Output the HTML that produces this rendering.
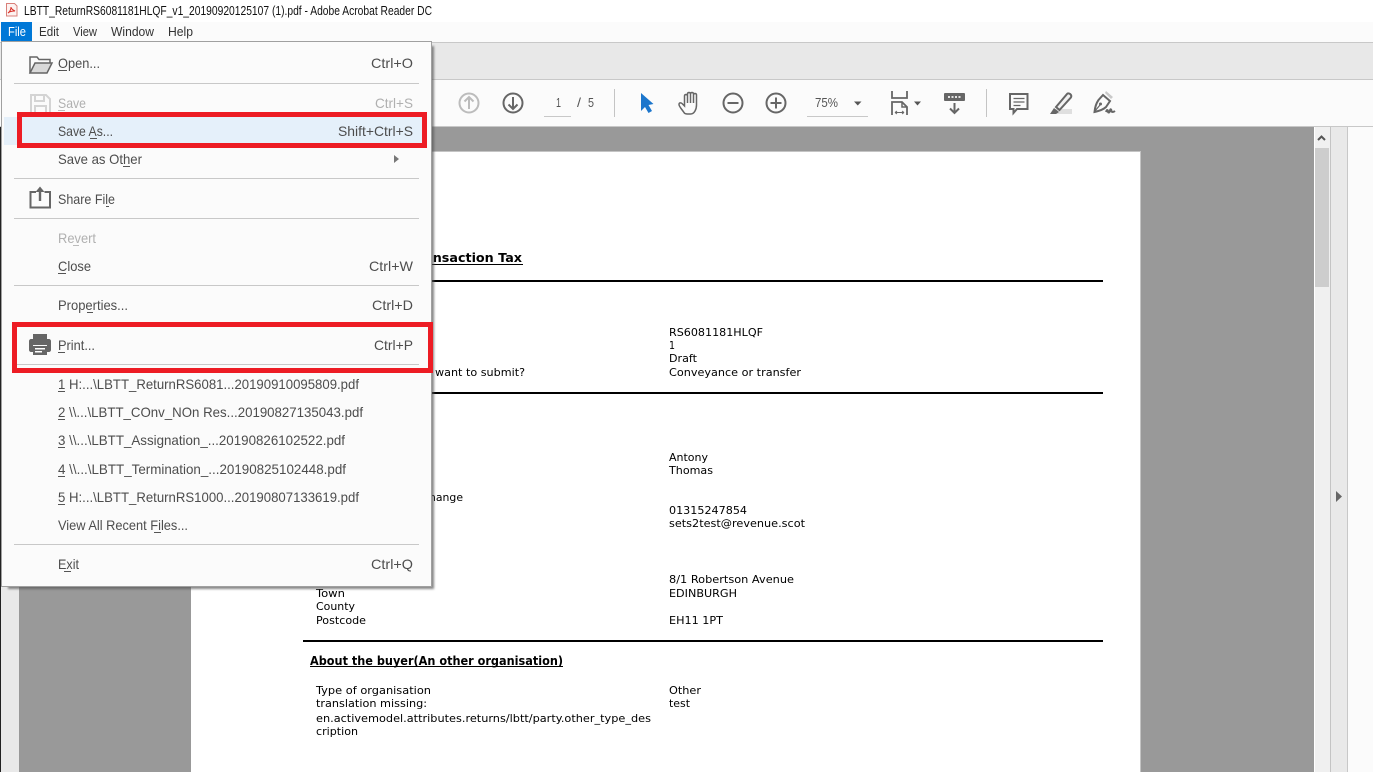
<!DOCTYPE html>
<html lang="en">
<head>
<meta charset="utf-8">
<title>Adobe Acrobat Reader DC</title>
<style>
html,body{margin:0;padding:0;background:#fff;width:1396px;height:772px;overflow:hidden}
svg{display:block}
.m{font-family:"Liberation Sans",sans-serif;font-size:14px;fill:#4d4d4d}
.d{fill:#b0b0b0}
.t{font-family:"Liberation Sans",sans-serif;font-size:13px;fill:#111}
.b{font-family:"Liberation Sans",sans-serif;font-size:13px;fill:#333}
.p{font-family:"DejaVu Sans",sans-serif;font-size:11px;fill:#000}
.h{font-family:"DejaVu Sans",sans-serif;font-size:12px;font-weight:bold;fill:#000}
.tb{font-family:"Liberation Sans",sans-serif;font-size:13px;fill:#555}
.i{fill:none;stroke:#666;stroke-width:2}
</style>
</head>
<body>
<svg width="1396" height="772" viewBox="0 0 1396 772" xmlns="http://www.w3.org/2000/svg">
<defs><filter id="s" x="-5%" y="-5%" width="110%" height="110%"><feGaussianBlur stdDeviation="1"/></filter></defs>
<rect width="1396" height="772" fill="#fff"/>

<!-- title bar -->
<path d="M6.500 3.500h8l2.500 2.500v10h-10.500z" fill="#fdf2f0" stroke="#d9807a"/>
<path d="M8 13c2-1 3-4 3-6 0 2 2 3 4 4-2 0-5 0-7 2z" fill="none" stroke="#d8322a"/>
<text class="t" x="24" y="15" textLength="408" lengthAdjust="spacingAndGlyphs">LBTT_ReturnRS6081181HLQF_v1_20190920125107 (1).pdf - Adobe Acrobat Reader DC</text>

<!-- menu bar -->
<rect x="0" y="22" width="1373" height="20" fill="#fbfbfb"/>
<rect x="1" y="22" width="31" height="19" fill="#0078d7"/>
<text class="b" x="8" y="36" textLength="18" lengthAdjust="spacingAndGlyphs" style="fill:#fff">File</text>
<text class="b" x="39" y="36" textLength="20" lengthAdjust="spacingAndGlyphs">Edit</text>
<text class="b" x="73" y="36" textLength="24" lengthAdjust="spacingAndGlyphs">View</text>
<text class="b" x="111" y="36" textLength="43" lengthAdjust="spacingAndGlyphs">Window</text>
<text class="b" x="168" y="36" textLength="25" lengthAdjust="spacingAndGlyphs">Help</text>

<!-- tab bar -->
<rect x="0" y="42" width="1373" height="38" fill="#e8e8e8"/>
<rect x="0" y="42" width="1373" height="1" fill="#c8c8c8"/>
<rect x="0" y="79" width="1373" height="1" fill="#c8c8c8"/>

<!-- toolbar -->
<rect x="0" y="80" width="1373" height="46" fill="#fbfbfb"/>
<rect x="0" y="126" width="1373" height="1" fill="#c8c8c8"/>

<circle cx="469" cy="103" r="9.500" fill="none" stroke="#bcbcbc" stroke-width="2"/>
<path d="M469 109V97M464.500 101.500l4.500-4.500 4.500 4.500" fill="none" stroke="#bcbcbc" stroke-width="2"/>
<circle cx="513" cy="103" r="9.500" class="i"/>
<path d="M513 97v12M508.500 104.500l4.500 4.500 4.500-4.500" class="i"/>

<text class="tb" x="556" y="107" textLength="5" lengthAdjust="spacingAndGlyphs">1</text>
<rect x="544" y="116" width="27" height="1" fill="#c8c8c8"/>
<text class="tb" x="577" y="107" textLength="4" lengthAdjust="spacingAndGlyphs">/</text>
<text class="tb" x="588" y="107" textLength="6" lengthAdjust="spacingAndGlyphs">5</text>
<rect x="614" y="89" width="1" height="28" fill="#c4c4c4"/>

<path d="M641 93L653.500 104 648.500 105 652 111 648.500 113 645 107 641 111z" fill="#1c76cc"/>

<path d="M684 112.500c-2-3-5-6-5-8 0-2 2-2 3-1l2.500 2.500V96c0-2 3-2 3 0v-2c0-2 3-2 3 0v0c0-2 3-2 3 0v1c0-2 3-2 3 0v10c0 4-2 9-6 9h-3c-2 0-3-.5-3.500-1.500zM687.500 96v7M690.500 94v9M693.500 94v9" fill="none" stroke="#666" stroke-width="1.500"/>

<circle cx="733" cy="103" r="9.500" class="i"/>
<path d="M727.500 103h11" class="i"/>
<circle cx="776" cy="103" r="9.500" class="i"/>
<path d="M770.500 103h11M776 97.500v11" class="i"/>

<text class="tb" x="815" y="107" textLength="23" lengthAdjust="spacingAndGlyphs">75%</text>
<rect x="807" y="116" width="61" height="1" fill="#c8c8c8"/>
<path d="M854 101.500h7.500l-3.750 4z" fill="#555"/>

<path d="M892 91v7h15v-7" class="i" style="stroke-width:1.800"/>
<path d="M892 115v-13h10l5 5v8" fill="none" stroke="#666" stroke-width="1.800"/>
<path d="M902 102v5h5" fill="none" stroke="#666" stroke-width="1.500"/>
<path d="M895 112.500h9M895 112.500l2-1.500M895 112.500l2 1.500M904 112.500l-2-1.500M904 112.500l-2 1.500" fill="none" stroke="#666"/>
<path d="M914 101.500h7l-3.500 4z" fill="#555"/>

<rect x="944" y="93" width="21" height="8" rx="1" fill="#666"/>
<path d="M948 97h2M951.500 97h2M955 97h2M958.500 97h2" stroke="#e4e4e4" stroke-width="2"/>
<path d="M954.500 103v10M950 108.500l4.500 4.500 4.500-4.500" class="i"/>
<rect x="986" y="89" width="1" height="28" fill="#c4c4c4"/>

<path d="M1010 94h17.500v15h-10.500l-3.500 4v-4h-3.500z" class="i"/>
<path d="M1013.500 98.500h11M1013.500 102h11M1013.500 105.500h7" stroke="#666" fill="none" stroke-width="1.200"/>

<rect x="1055" y="109" width="17" height="5" fill="#dfdfdf"/>
<path d="M1056 107l11-13c1-1.500 3.500 0 4 1 .5 1 .5 2-.5 3l-11 12z" fill="#f2f2f2" stroke="#666" stroke-width="2"/>
<path d="M1054 108l5 4-3 2h-6z" fill="#666"/>

<path d="M1106 91l7 6-2 2-6-6z" fill="#c9c9c9"/>
<path d="M1103 95l7 6-4 6c-3 3-7 4-11.500 5 .5-5 1.500-8.500 4-12z" fill="none" stroke="#666" stroke-width="2"/>
<path d="M1095 111l5-6" stroke="#666" stroke-width="1.200"/>
<circle cx="1100.500" cy="104" r="1.500" fill="#666"/>
<path d="M1106 112c1-3 2-2 2-.5s1.500 1.500 2-1 1.500-.5 1.500.5 1.500 1.500 3.500 0" fill="none" stroke="#666" stroke-width="2"/>

<!-- document area -->
<rect x="0" y="127" width="1373" height="645" fill="#999"/>
<rect x="0" y="127" width="1" height="645" fill="#222"/>
<rect x="1" y="127" width="18" height="645" fill="#e9e9e9"/>

<!-- right rails -->
<rect x="1314" y="127" width="1" height="645" fill="#fff"/>
<rect x="1315" y="127" width="15" height="645" fill="#f0f0f0"/>
<rect x="1315" y="148" width="14" height="139" fill="#cdcdcd"/>
<path d="M1318 140l3.500-3.500 3.500 3.500" fill="none" stroke="#555" stroke-width="2"/>
<rect x="1330" y="127" width="1" height="645" fill="#c4c4c4"/>
<rect x="1331" y="127" width="16" height="645" fill="#e9e9e9"/>
<rect x="1347" y="127" width="1" height="645" fill="#c8c8c8"/>
<rect x="1348" y="127" width="25" height="645" fill="#fbfbfb"/>
<path d="M1336 491l6 5.500-6 5.500z" fill="#666"/>

<!-- page -->
<rect x="191" y="151" width="950" height="621" fill="#c4c4c4"/>
<rect x="191" y="152" width="949" height="620" fill="#fff"/>

<text class="h" x="269" y="262" textLength="253" lengthAdjust="spacingAndGlyphs">Land and Buildings Transaction Tax</text>
<rect x="269" y="264" width="254" height="1" fill="#000"/>
<rect x="303" y="280" width="800" height="2" fill="#000"/>
<rect x="303" y="392" width="800" height="2" fill="#000"/>
<rect x="303" y="640" width="800" height="2" fill="#000"/>

<text class="p" x="669" y="336" textLength="94" lengthAdjust="spacingAndGlyphs">RS6081181HLQF</text>
<text class="p" x="669" y="349" textLength="6" lengthAdjust="spacingAndGlyphs">1</text>
<text class="p" x="669" y="362" textLength="28" lengthAdjust="spacingAndGlyphs">Draft</text>
<text class="p" x="435" y="376" textLength="90" lengthAdjust="spacingAndGlyphs">want to submit?</text>
<text class="p" x="669" y="376" textLength="132" lengthAdjust="spacingAndGlyphs">Conveyance or transfer</text>
<text class="p" x="669" y="461" textLength="39" lengthAdjust="spacingAndGlyphs">Antony</text>
<text class="p" x="669" y="474" textLength="44" lengthAdjust="spacingAndGlyphs">Thomas</text>
<text class="p" x="429" y="501" textLength="34" lengthAdjust="spacingAndGlyphs">hange</text>
<text class="p" x="669" y="514" textLength="78" lengthAdjust="spacingAndGlyphs">01315247854</text>
<text class="p" x="669" y="527" textLength="136" lengthAdjust="spacingAndGlyphs">sets2test@revenue.scot</text>
<text class="p" x="669" y="583" textLength="125" lengthAdjust="spacingAndGlyphs">8/1 Robertson Avenue</text>
<text class="p" x="316" y="597" textLength="29" lengthAdjust="spacingAndGlyphs">Town</text>
<text class="p" x="669" y="597" textLength="68" lengthAdjust="spacingAndGlyphs">EDINBURGH</text>
<text class="p" x="316" y="610" textLength="39" lengthAdjust="spacingAndGlyphs">County</text>
<text class="p" x="316" y="624" textLength="50" lengthAdjust="spacingAndGlyphs">Postcode</text>
<text class="p" x="669" y="624" textLength="54" lengthAdjust="spacingAndGlyphs">EH11 1PT</text>
<text class="h" x="310" y="665" textLength="253" lengthAdjust="spacingAndGlyphs">About the buyer(An other organisation)</text>
<rect x="310" y="666" width="253" height="1" fill="#000"/>
<text class="p" x="316" y="694" textLength="115" lengthAdjust="spacingAndGlyphs">Type of organisation</text>
<text class="p" x="669" y="694" textLength="32" lengthAdjust="spacingAndGlyphs">Other</text>
<text class="p" x="316" y="707" textLength="111" lengthAdjust="spacingAndGlyphs">translation missing:</text>
<text class="p" x="669" y="707" textLength="21" lengthAdjust="spacingAndGlyphs">test</text>
<text class="p" x="316" y="722" textLength="335" lengthAdjust="spacingAndGlyphs">en.activemodel.attributes.returns/lbtt/party.other_type_des</text>
<text class="p" x="316" y="735" textLength="42" lengthAdjust="spacingAndGlyphs">cription</text>

<!-- menu shadow -->
<rect x="8" y="46" width="426" height="543" fill="#555" opacity=".7" filter="url(#s)"/>
<!-- menu -->
<rect x="1.500" y="41.500" width="430" height="545" fill="#fbfbfb" stroke="#a0a0a0"/>
<rect x="4" y="117" width="418" height="28" fill="#e5f0fa"/>

<!-- separators -->
<g fill="#c8c8c8">
<rect x="14" y="83" width="405" height="1"/>
<rect x="14" y="178" width="405" height="1"/>
<rect x="14" y="218" width="405" height="1"/>
<rect x="14" y="285" width="405" height="1"/>
<rect x="14" y="364" width="405" height="1"/>
<rect x="14" y="544" width="405" height="1"/>
</g>

<!-- menu items -->
<text class="m" x="58" y="68" textLength="42" lengthAdjust="spacingAndGlyphs">Open...</text>
<text class="m" x="371" y="68" textLength="42" lengthAdjust="spacingAndGlyphs">Ctrl+O</text>
<text class="m d" x="58" y="108" textLength="28" lengthAdjust="spacingAndGlyphs">Save</text>
<text class="m d" x="375" y="108" textLength="38" lengthAdjust="spacingAndGlyphs">Ctrl+S</text>
<text class="m" x="58" y="136" textLength="55" lengthAdjust="spacingAndGlyphs">Save As...</text>
<text class="m" x="338" y="136" textLength="75" lengthAdjust="spacingAndGlyphs">Shift+Ctrl+S</text>
<text class="m" x="58" y="164" textLength="84" lengthAdjust="spacingAndGlyphs">Save as Other</text>
<path d="M394 155l5 4-5 4z" fill="#777"/>
<text class="m" x="58" y="204" textLength="57" lengthAdjust="spacingAndGlyphs">Share File</text>
<text class="m d" x="58" y="243" textLength="38" lengthAdjust="spacingAndGlyphs">Revert</text>
<text class="m" x="58" y="271" textLength="33" lengthAdjust="spacingAndGlyphs">Close</text>
<text class="m" x="369" y="271" textLength="44" lengthAdjust="spacingAndGlyphs">Ctrl+W</text>
<text class="m" x="58" y="310" textLength="70" lengthAdjust="spacingAndGlyphs">Properties...</text>
<text class="m" x="372" y="310" textLength="41" lengthAdjust="spacingAndGlyphs">Ctrl+D</text>
<text class="m" x="58" y="350" textLength="37" lengthAdjust="spacingAndGlyphs">Print...</text>
<text class="m" x="374" y="350" textLength="39" lengthAdjust="spacingAndGlyphs">Ctrl+P</text>
<text class="m" x="58" y="389" textLength="301" lengthAdjust="spacingAndGlyphs">1 H:...\LBTT_ReturnRS6081...20190910095809.pdf</text>
<text class="m" x="58" y="417" textLength="305" lengthAdjust="spacingAndGlyphs">2 \\...\LBTT_COnv_NOn Res...20190827135043.pdf</text>
<text class="m" x="58" y="445" textLength="287" lengthAdjust="spacingAndGlyphs">3 \\...\LBTT_Assignation_...20190826102522.pdf</text>
<text class="m" x="58" y="474" textLength="288" lengthAdjust="spacingAndGlyphs">4 \\...\LBTT_Termination_...20190825102448.pdf</text>
<text class="m" x="58" y="502" textLength="301" lengthAdjust="spacingAndGlyphs">5 H:...\LBTT_ReturnRS1000...20190807133619.pdf</text>
<text class="m" x="58" y="530" textLength="130" lengthAdjust="spacingAndGlyphs">View All Recent Files...</text>
<text class="m" x="58" y="569" textLength="21" lengthAdjust="spacingAndGlyphs">Exit</text>
<text class="m" x="371" y="569" textLength="42" lengthAdjust="spacingAndGlyphs">Ctrl+Q</text>

<!-- mnemonic underlines -->
<g fill="#555">
<rect x="58" y="70" width="9" height="1"/>
<rect x="58" y="110" width="7" height="1" fill="#bbb"/>
<rect x="90" y="138" width="7" height="1"/>
<rect x="123" y="166" width="7" height="1"/>
<rect x="106" y="206" width="3" height="1"/>
<rect x="73" y="245" width="6" height="1" fill="#bbb"/>
<rect x="58" y="273" width="8" height="1"/>
<rect x="87" y="312" width="6" height="1"/>
<rect x="58" y="352" width="7" height="1"/>
<rect x="58" y="391" width="7" height="1"/>
<rect x="58" y="419" width="7" height="1"/>
<rect x="58" y="447" width="7" height="1"/>
<rect x="58" y="476" width="7" height="1"/>
<rect x="58" y="504" width="7" height="1"/>
<rect x="154" y="532" width="7" height="1"/>
<rect x="64" y="571" width="7" height="1"/>
</g>

<!-- menu icons -->
<path d="M30 73V57h7l2 2.500h11V63" fill="none" stroke="#666" stroke-width="1.500"/>
<path d="M30 73l5-10h17l-5 10z" fill="#d9d9d9" stroke="#666" stroke-width="1.500"/>

<path d="M31 95h15l4 4v14H31z" fill="none" stroke="#d4d4d4" stroke-width="2"/>
<path d="M35 95v6h9v-6M35 113v-7h11v7" fill="none" stroke="#d4d4d4" stroke-width="2"/>

<path d="M36 192h-5.500v15.500h19.500V192h-5.500" fill="none" stroke="#666" stroke-width="2"/>
<path d="M40 201v-11" fill="none" stroke="#666" stroke-width="2.400"/>
<path d="M35.500 192l4.500-5.500 4.500 5.500z" fill="#666"/>

<rect x="33" y="334" width="14" height="6" fill="#666"/>
<path d="M31 339h18c1 0 2 1 2 2v9c0 1-1 2-2 2h-2v-7H33v7h-2c-1 0-2-1-2-2v-9c0-1 1-2 2-2z" fill="#666"/>
<rect x="33" y="346" width="14" height="9" fill="#666"/>
<rect x="35" y="348" width="10" height="1.500" fill="#fff"/>
<rect x="35" y="351" width="7" height="1.500" fill="#fff"/>

<!-- red annotation boxes -->
<rect x="19.500" y="114.500" width="405" height="31" fill="none" stroke="#ed1c24" stroke-width="5"/>
<rect x="14.500" y="324.500" width="416" height="46" fill="none" stroke="#ed1c24" stroke-width="5"/>
</svg>
</body>
</html>
